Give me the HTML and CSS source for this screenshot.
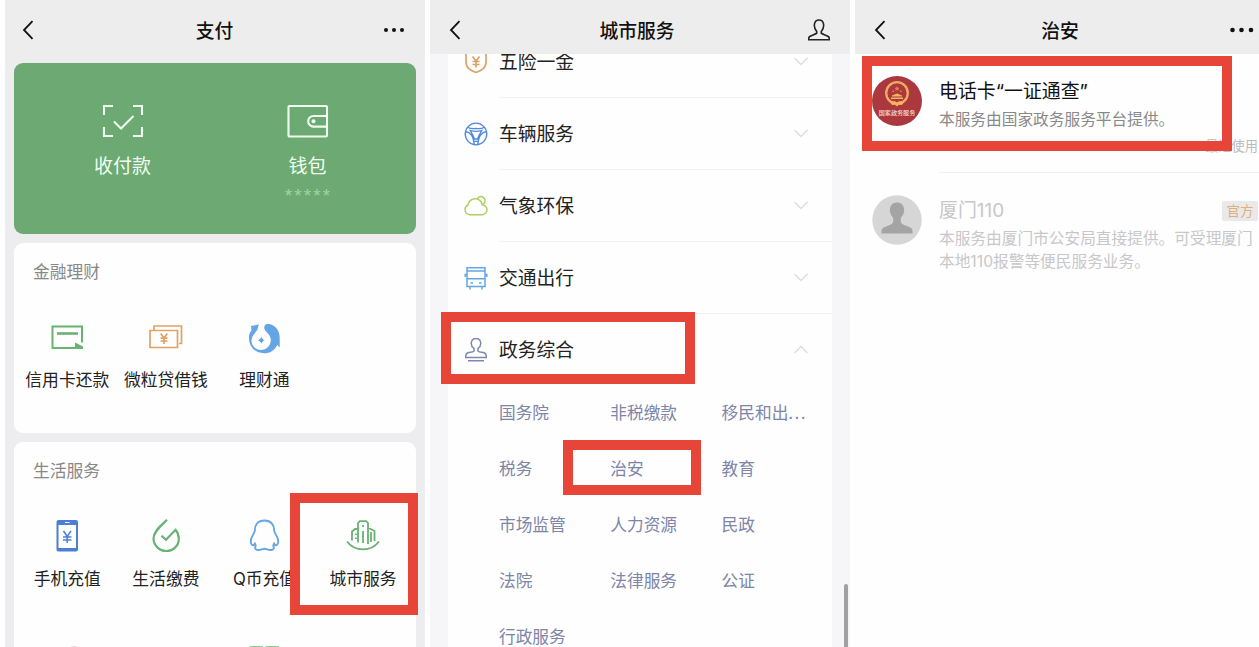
FILE: index.html
```html
<!DOCTYPE html>
<html lang="zh-CN">
<head>
<meta charset="utf-8">
<title>城市服务</title>
<link rel="stylesheet" href="styles.css">
</head>
<body>
<main class="board">
  <section class="phone phone-pay">
    <header class="bar">
      <svg class="back" width="12" height="20" viewBox="0 0 12 20"><path d="M10.500 1.200 2 10l8.500 8.800"/></svg>
      <h1>支付</h1>
      <svg class="more" width="22" height="6" viewBox="0 0 22 6"><circle cx="3" cy="3" r="2"/><circle cx="11" cy="3" r="2"/><circle cx="19" cy="3" r="2"/></svg>
    </header>
    <div class="wallet">
      <div class="wallet-item">
        <svg width="42" height="34" viewBox="0 0 42 34"><path d="M11 2H2v9M31 2h9v9M11 32H2v-9M31 32h9v-9M12 17.500l7 7L31.500 12"/></svg>
        <span>收付款</span>
      </div>
      <div class="wallet-item">
        <svg width="42" height="34" viewBox="0 0 42 34"><rect x="1.500" y="2" width="38.500" height="30.500" rx="1"/><path d="M40 12H26.500a5.300 5.300 0 0 0 0 10.600H40"/><circle class="dot" cx="26.500" cy="17.300" r="2"/></svg>
        <span>钱包</span>
        <small>*****</small>
      </div>
    </div>
    <div class="card finance">
      <h2>金融理财</h2>
      <div class="apps">
        <div class="app">
          <svg class="green" width="36" height="36" viewBox="0 0 36 36"><path d="M33 23.500V7.500H3.500v21.500H26"/><path class="thick" d="M8 14.500h21"/><path class="fill" d="M26 23.500 34 27.500v2.500H26z"/></svg>
          <span>信用卡还款</span>
        </div>
        <div class="app">
          <svg class="orange" width="36" height="36" viewBox="0 0 36 36"><path d="M6 11V7h27.500v17.500H31M2 11.500h27.500V28.500H2zM12.700 14.500l3.300 4.500 3.300-4.500M16 19v6M12.500 19.200h7M12.500 22h7"/></svg>
          <span>微粒贷借钱</span>
        </div>
        <div class="app">
          <svg class="sky" width="36" height="36" viewBox="0 0 36 36"><path class="fill" d="M5 7 12.800 5.500l-1.300 5C9.500 14 5.500 16.500 5.500 22c.3 5.500 4.500 9 9.500 9 5.500 0 10-4.500 9.800-10C24.600 15.500 20.500 14 18.500 10c-1-2.500.5-4.800 3.500-5C28 5 34 11 33.700 19V28.500l-2.500-2.600C28.500 31.500 24 34.200 18 34.200 9 34 3 27.500 3 19c0-4 1-6 2.500-7.500z"/><path class="fill" d="m15.300 17.700 1 2.500 2.500 1-2.500 1-1 2.500-1-2.500-2.500-1 2.500-1z"/><circle class="fill" cx="15.300" cy="21.200" r="2"/></svg>
          <span>理财通</span>
        </div>
      </div>
    </div>
    <div class="card life">
      <h2>生活服务</h2>
      <div class="apps">
        <div class="app">
          <svg class="blue" width="36" height="36" viewBox="0 0 36 36"><rect class="fill" x="7.500" y="2" width="21.500" height="31.500" rx="2"/><path class="white" d="M9.500 7h17.500v23H9.500z"/><path d="M16 4.500h4.500" stroke="#fff" stroke-width="1"/><path d="m14.500 13 3.700 5.500 3.800-5.500M18.200 18.500V25M14 19h8.400M14 22h8.400" stroke-width="1.500"/></svg>
          <span>手机充值</span>
        </div>
        <div class="app">
          <svg class="green" width="36" height="36" viewBox="0 0 36 36"><path class="mid" d="M19 1.800C14 7 5.500 13 5.500 20.500A12.800 12.800 0 0 0 18.300 33c7 0 12.800-5.500 12.500-12.500-.1-3.500-1-6-3.300-8.700l-9.500 9.900-4.500-4"/></svg>
          <span>生活缴费</span>
        </div>
        <div class="app">
          <svg class="sky" width="36" height="36" viewBox="0 0 36 36"><path stroke-width="1.900" d="M18.500 2.500c-6.500 0-9.700 4.200-9.700 10C8.500 16 4.800 18.500 4.800 23c0 2.500 1 4.500 2.200 4.300 1.200-.2 1.700-.8 3-1.800M8.500 24.500l1.200 3.500c-1.200 2-.5 3.500 2 4 3 .5 4.500-1.300 6.800-1.300s3.800 1.800 6.800 1.300c2.500-.5 3.200-2 2-4l1.200-3.500M27 25.500c1.300 1 1.800 1.600 3 1.800 1.200.2 2.200-1.800 2.200-4.300 0-4.500-3.700-7-4-10.500 0-5.800-3.200-10-9.700-10"/></svg>
          <span>Q币充值</span>
        </div>
        <div class="app">
          <svg class="green" width="36" height="36" viewBox="0 0 36 36"><path stroke-width="1.800" d="M2 23.500c8 10.500 24 10.500 32 0M7 22.500V13.500l3-2.500h3M13 24.500V5l1.800-1.800h6.400L23 5v21M18 13v12M23 9.500l6.500 3.500v10M26 14v10M11 15.500v1.500M11 19.500V21M18 7v2"/></svg>
          <span>城市服务</span>
        </div>
        <div class="app">
          <svg class="pink" width="36" height="36" viewBox="0 0 36 36"><circle class="fill" cx="25" cy="8" r="6"/></svg>
        </div>
        <div class="app"></div>
        <div class="app">
          <svg class="green" width="36" height="36" viewBox="0 0 36 36"><path class="thick" d="M5 14V3.500h10.500V14zM21 14V3.500h10.500V14z"/></svg>
        </div>
      </div>
    </div>
    <i class="mark mark-city"></i>
  </section>

  <section class="phone phone-city">
    <header class="bar">
      <svg class="back" width="12" height="20" viewBox="0 0 12 20"><path d="M10.500 1.200 2 10l8.500 8.800"/></svg>
      <h1>城市服务</h1>
      <svg class="user" width="22" height="22" viewBox="0 0 22 22"><path d="M8.700 12.500C6.500 10 6 7.500 6.500 4.800 7 2.500 8.800 1 11 1s4 1.500 4.500 3.800c.5 2.700 0 5.200-2.200 7.700v1.800c2 1.200 4.700 1.700 7 3.200.8.500 1.100 1.500 1 3.200H.7c-.1-1.700.2-2.700 1-3.200 2.300-1.500 5-2 7-3.200z"/></svg>
    </header>
    <div class="list">
      <div class="row first">
        <svg class="orange" width="24" height="24" viewBox="0 0 24 24"><path d="M2 3c4 0 7-1 10-3 3 2 6 3 10 3v9c0 6-4 8-10 10.500C6 20 2 18 2 12zM8.500 6.500l3.500 4.500 3.500-4.500M12 11v6.500M8.500 11.500h7M8.500 14.500h7"/></svg>
        <div class="line"><b>五险一金</b><svg class="chev" width="16" height="9" viewBox="0 0 16 9"><path d="m1.500 1 6.500 6.500L14.500 1"/></svg></div>
      </div>
      <div class="row">
        <svg class="blue wheel" width="24" height="24" viewBox="0 0 24 24"><circle cx="12" cy="12" r="10.800"/><path d="M3.800 5.200C7 7.500 9.500 6.500 12 6.500s5 1 8.200-1.300M1.500 9.500c5 .5 8 5 8.800 13M22.500 9.500c-5 .5-8 5-8.800 13M6.200 8.500c1.500 2.500 3.200 5 4.300 8.500h3c1.100-3.500 2.800-6 4.300-8.500-3.500 1-8.100 1-11.600 0zM10.300 19.300h3.400"/></svg>
        <div class="line"><b>车辆服务</b><svg class="chev" width="16" height="9" viewBox="0 0 16 9"><path d="m1.500 1 6.500 6.500L14.500 1"/></svg></div>
      </div>
      <div class="row">
        <svg class="lime" width="24" height="24" viewBox="0 0 24 24"><path d="M18.300 11C17.500 7 14.500 4.800 11 4.800c-3.800 0-6.800 2.800-7 6.200C2 12 1 13.500 1 15.500c0 3 2.300 5.200 5.300 5.200h11.500c3 0 5.200-2.200 5.200-4.900C23 13.300 21 11.200 18.300 11zM13 5.200A4.200 4.200 0 1 1 19.200 10.300"/></svg>
        <div class="line"><b>气象环保</b><svg class="chev" width="16" height="9" viewBox="0 0 16 9"><path d="m1.500 1 6.500 6.500L14.500 1"/></svg></div>
      </div>
      <div class="row">
        <svg class="sky" width="24" height="24" viewBox="0 0 24 24"><path d="M3 20.500V1.800h18v18.700zM3 5h18M3 12.800h18M3 8.500H1.200v2.500M21 8.500h1.800v2.500M6 21v2.500M18 21v2.500M6.500 17h2.500M15 17h2.500"/></svg>
        <div class="line"><b>交通出行</b><svg class="chev" width="16" height="9" viewBox="0 0 16 9"><path d="m1.500 1 6.500 6.500L14.500 1"/></svg></div>
      </div>
      <div class="row open">
        <svg class="slate" width="24" height="24" viewBox="0 0 24 24"><path d="M10 10.500C7.500 8.500 7 6.500 7.300 4.500a4.750 4.750 0 0 1 9.400 0c.3 2-.2 4-2.700 6v2.500c1.500 1.500 4 1 6 1.800 2 .8 2.500 2.500 2.200 4.700H1.800C1.500 17.300 2 15.600 4 14.800c2-.8 4.500-.3 6-1.800zM4 22.800h16"/></svg>
        <div class="line"><b>政务综合</b><svg class="chev" width="16" height="9" viewBox="0 0 16 9"><path d="M1.500 8 8 1.500 14.500 8"/></svg></div>
      </div>
      <div class="links">
        <a>国务院</a><a>非税缴款</a><a>移民和出<span>...</span></a>
        <a>税务</a><a>治安</a><a>教育</a>
        <a>市场监管</a><a>人力资源</a><a>民政</a>
        <a>法院</a><a>法律服务</a><a>公证</a>
        <a>行政服务</a>
      </div>
    </div>
    <i class="scroll"></i>
    <i class="mark mark-gov"></i>
    <i class="mark mark-police"></i>
  </section>

  <section class="phone phone-safe">
    <header class="bar">
      <svg class="back" width="12" height="20" viewBox="0 0 12 20"><path d="M10.500 1.200 2 10l8.500 8.800"/></svg>
      <h1>治安</h1>
      <svg class="more" width="24" height="6" viewBox="0 0 24 6"><circle cx="2.500" cy="3" r="2.300"/><circle cx="11.500" cy="3" r="2.300"/><circle cx="21" cy="3" r="2.300"/></svg>
    </header>
    <article class="entry">
      <div class="emblem">
        <svg width="28" height="27" viewBox="0 0 28 27"><circle cx="14" cy="12" r="10.800" fill="none" stroke="#f0ac5e" stroke-width="2.300"/><path fill="#e8873f" d="m14 5 .8 1.800h1.900l-1.500 1.200.6 1.900-1.800-1.200-1.800 1.200.6-1.900-1.500-1.200h1.900zM9.500 9.500H11V11H9.500zM17 9.500h1.500V11H17z"/><path fill="#f3b45f" d="m9 14.500 5-2 5 2v1H9zM8 16.500h12v1.500H8zM7 21l4.500-1 2.500 1.500 2.500-1.500 4.500 1-2 3-3-.5-2 2-2-2-3 .5z"/></svg>
        <span>国家政务服务</span>
      </div>
      <div class="body">
        <h3>电话卡“一证通查”</h3>
        <p>本服务由国家政务服务平台提供。</p>
        <em>最近使用</em>
      </div>
    </article>
    <article class="entry muted">
      <svg class="avatar" width="50" height="50" viewBox="0 0 50 50"><circle cx="25" cy="25" r="24.700" fill="#d7d6d7"/><path fill="#a5a4a5" d="M20.500 22c-2.500-3-3-6-2.500-8.500C18.600 9.500 21.500 7.500 25 7.500s6.400 2 7 6c.5 2.500 0 5.500-2.500 8.500-.7 1-.8 2-.8 4 0 2.500 1.800 3.500 5.300 4.700 4 1.300 6.500 2.300 6.500 5.300v2.500h-31V36c0-3 2.500-4 6.500-5.300 3.500-1.200 5.300-2.200 5.300-4.700 0-2-.1-3-.8-4z"/></svg>
      <div class="body">
        <div class="head"><h3>厦门110</h3><span class="tag">官方</span></div>
        <p>本服务由厦门市公安局直接提供。可受理厦门<br>本地110报警等便民服务业务。</p>
      </div>
    </article>
    <i class="mark mark-card"></i>
  </section>
</main>
</body>
</html>
```
FILE: styles.css
```css
* { box-sizing: border-box; }
body {
  margin: 0;
  background: #fff;
  color: #222;
  font-family: Inter, "Noto Sans CJK SC", sans-serif;
}
h1, h2, h3, p { margin: 0; font-weight: 400; }
svg { display: block; flex: none; fill: none; stroke: currentColor; stroke-width: 1.5; }
.thick { stroke-width: 2.6; }
.mid { stroke-width: 2.2; }
.fill { fill: currentColor; stroke: none; }
.white { fill: #fff; stroke: none; }
.green { color: #68b273; stroke-width: 2; }
.orange { color: #dfa364; stroke-width: 1.7; }
.sky { color: #64a5e5; }
.blue { color: #4b7fd6; }
.wheel { color: #5088e0; stroke-width: 1.3; }
.lime { color: #acd064; }
.slate { color: #7f88ae; }
.pink { color: #f5d3d6; }

.board {
  display: flex;
  gap: 5px;
  width: 1259px;
  height: 647px;
  padding-left: 5px;
  overflow: hidden;
}
.phone { position: relative; flex: none; height: 647px; overflow: hidden; }
.phone-pay { width: 420px; background: #edecee; }
.phone-city { width: 420px; background: #f6f5f7; }
.phone-safe { width: 410px; background: #fefefe; }

.bar {
  display: grid;
  grid-template-columns: 80px 1fr 80px;
  align-items: center;
  height: 54px;
  padding: 6px 20px 0 18px;
  background: #ededed;
  color: #111;
}
.bar h1 { padding-top: 3px; font-size: 18.8px; line-height: 28px; font-weight: 500; text-align: center; }
.back { stroke-width: 1.8; }
.more { justify-self: end; fill: currentColor; stroke: none; }
.user { justify-self: end; stroke-width: 1.6; color: #222; }
.phone-pay .bar { grid-template-columns: 82px 1fr 80px; height: 63px; padding-bottom: 9px; padding-left: 17px; }
.phone-safe .bar { padding-right: 11px; padding-left: 19px; grid-template-columns: 72px 1fr 80px; }
.phone-city .bar { padding-left: 19px; grid-template-columns: 75px 1fr 80px; }

.wallet {
  display: grid;
  grid-template-columns: 185px 185px;
  justify-content: center;
  height: 171px;
  margin: 0 9px;
  padding-top: 41px;
  border-radius: 9px;
  background: #6ca973;
  color: #f0fff0;
}
.wallet-item { display: flex; flex-direction: column; align-items: center; }
.wallet-item svg { stroke-width: 2.1; }
.wallet-item .dot { fill: currentColor; stroke: none; }
.wallet-item span { margin-top: 15px; font-size: 19px; line-height: 28px; }
.wallet-item small {
  color: #a0d3a3;
  font-family: "Liberation Sans", sans-serif;
  font-size: 19px;
  line-height: 20px;
  letter-spacing: 2.1px;
  padding: 5px 0 0 2px;
}

.card { margin: 9px 9px 0; border-radius: 9px; background: #fefefe; }
.finance { height: 190px; }
.life { height: 240px; }
.card h2 { padding: 17px 0 0 19px; font-size: 16.8px; line-height: 25px; color: #888; }
.apps { display: grid; grid-template-columns: repeat(4, 98.6px); padding: 34px 0 0 4px; }
.app { display: flex; flex-direction: column; align-items: center; height: 126px; white-space: nowrap; }
.app span { margin-top: 13px; font-size: 16.8px; line-height: 25px; }

.list { height: 593px; margin: 0 18px; padding-left: 16px; background: #fefefe; overflow: hidden; }
.row { display: flex; align-items: center; gap: 11px; height: 72.2px; }
.row.first { height: 43.5px; }
.line {
  display: flex;
  flex: 1;
  align-items: center;
  justify-content: space-between;
  height: 100%;
  padding-right: 23px;
  border-bottom: 1px solid #f3f1f4;
}
.row.first svg, .row.first b { transform: translateY(-14px); }
.open .line { border-bottom: 0; padding-bottom: 1px; }
.line b { padding-top: 3px; font-size: 18.8px; line-height: 28px; font-weight: 400; }
.chev { color: #dedde1; }
.links { display: grid; grid-template-columns: 111.3px 111.3px 1fr; padding-left: 35px; }
.links a {
  height: 56px;
  padding-top: 15px;
  color: #7d85a8;
  font-size: 16.7px;
  line-height: 25px;
  white-space: nowrap;
}
.links span { letter-spacing: 1.4px; }
.scroll { position: absolute; right: 2.5px; top: 584px; width: 4px; height: 80px; border-radius: 2px; background: #a0a0a2; }

.entry { display: flex; gap: 17px; height: 119px; padding: 22px 0 0 17px; }
.body { flex: 1; height: 97px; padding-top: 1px; border-bottom: 1px solid #f1f0f2; white-space: nowrap; }
.entry h3 { font-size: 18.9px; line-height: 30px; color: #111; }
.entry p { font-size: 15.7px; line-height: 23px; margin-top: 1px; color: #898989; }
.entry em {
  display: block;
  padding-right: 7px;
  margin-top: 5px;
  font-style: normal;
  font-size: 13.2px;
  line-height: 20px;
  color: #bbb;
  text-align: right;
}
.emblem {
  display: flex;
  flex: none;
  flex-direction: column;
  align-items: center;
  width: 50px;
  height: 50px;
  padding-top: 5px;
  border-radius: 50%;
  background: #aa383e;
  color: #f6dfd6;
}
.emblem svg { stroke: none; }
.emblem span { font-size: 6.1px; line-height: 9px; font-weight: 500; white-space: nowrap; }
.avatar { stroke: none; }
.muted .body { border-bottom: 0; }
.muted h3, .muted p { color: #c8c7ca; }
.head { display: flex; justify-content: space-between; align-items: center; padding-right: 7px; }
.tag {
  padding: 0 4.5px;
  border-radius: 2px;
  background: #e9e8ea;
  color: #dfb077;
  font-size: 13.5px;
  line-height: 20px;
}

/* Red frames laid over the screens */
.mark { position: absolute; border: 10px solid #e64537; }
.mark-city { left: 285px; top: 493px; width: 128px; height: 122px; }
.mark-gov { left: 11px; top: 312px; width: 254px; height: 72px; }
.mark-police { left: 133px; top: 440px; width: 138px; height: 55px; }
.mark-card { left: 7px; top: 56px; width: 370px; height: 95px; }
```
